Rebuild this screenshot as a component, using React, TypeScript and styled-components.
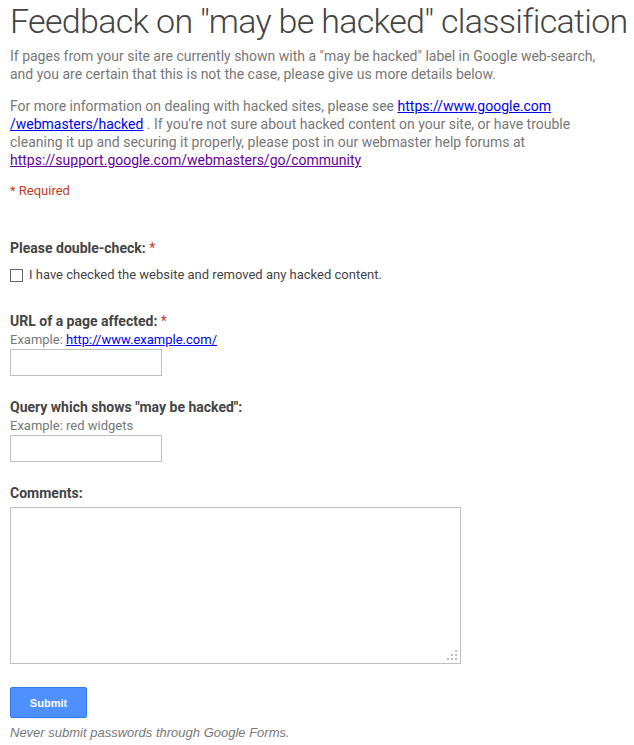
import React from "react";
import styled, { createGlobalStyle } from "styled-components";

const Global = createGlobalStyle`
  html, body { margin: 0; padding: 0; background: #fff; }
  body { font-family: Roboto, Arial, sans-serif; }
`;

const Page = styled.div`
  padding: 0 10px;
`;

const Title = styled.h1`
  margin: 0;
  font-family: Roboto, Arial, sans-serif;
  font-weight: 300;
  font-size: 34px;
  letter-spacing: -0.7px;
  line-height: 42px;
  color: #444;
  white-space: nowrap;
`;

const Desc = styled.p`
  margin: 5px 0 0;
  max-width: 598px;
  font-size: 14px;
  line-height: 18px;
  color: #777;
  & + & { margin-top: 14px; }
`;

const Link = styled.a<{ $visited?: boolean }>`
  color: ${(p) => (p.$visited ? "#660099" : "#0000ee")};
  text-decoration: underline;
`;

const Required = styled.div`
  margin-top: 13px;
  font-size: 13px;
  line-height: 18px;
  color: #c43b1d;
`;

const Question = styled.div<{ $gap: number }>`
  margin-top: ${(p) => p.$gap}px;
  display: flex;
  flex-direction: column;
  align-items: flex-start;
`;

const Label = styled.div`
  font-size: 14px;
  line-height: 18px;
  font-weight: 700;
  color: #444;
`;

const Star = styled.span`
  color: #c43b1d;
  font-weight: 400;
`;

const Help = styled.div`
  font-size: 13px;
  line-height: 18px;
  margin-top: 1px;
  color: #777;
`;

const CheckRow = styled.label`
  display: flex;
  align-items: center;
  gap: 6px;
  margin-top: 9px;
  font-size: 13px;
  line-height: 18px;
  color: #444;
`;

const Box = styled.span`
  width: 11px;
  height: 11px;
  border: 1px solid #666;
  background: #fff;
  display: inline-block;
`;

const TextInput = styled.div`
  width: 152px;
  height: 27px;
  border: 1px solid #c0c0c0;
  box-sizing: border-box;
`;

const TextArea = styled.div`
  position: relative;
  width: 451px;
  height: 157px;
  box-sizing: border-box;
  border: 1px solid #c0c0c0;
  margin-top: 5px;
`;

const Grip = styled.svg`
  position: absolute;
  right: 2px;
  bottom: 2px;
`;

const Submit = styled.button`
  margin-top: 23px;
  width: 77px;
  height: 31px;
  border: 1px solid #3079ed;
  border-radius: 2px;
  background: #4d90fe;
  color: #fff;
  font-family: Arial, "Liberation Sans", sans-serif;
  font-weight: 700;
  font-size: 11px;
  padding: 0;
`;

const Note = styled.div`
  margin-top: 7px;
  font-family: Arial, "Liberation Sans", sans-serif;
  font-style: italic;
  font-size: 13px;
  line-height: 16px;
  color: #777;
`;

export default function App() {
  return (
    <Page>
      <Global />
      <Title>Feedback on "may be hacked" classification</Title>
      <Desc>
        If pages from your site are currently shown with a "may be hacked" label in Google web-search,
        and you are certain that this is not the case, please give us more details below.
      </Desc>
      <Desc>
        For more information on dealing with hacked sites, please see{" "}
        <Link href="#">https://www.google.com</Link>
        <br />
        <Link href="#">/webmasters/hacked</Link> . If you're not sure about hacked content on your site, or have trouble
        cleaning it up and securing it properly, please post in our webmaster help forums at{" "}
        <Link href="#" $visited>https://support.google.com/webmasters/go/community</Link>
      </Desc>
      <Required>* Required</Required>
      <Question $gap={39}>
        <Label>
          Please double-check: <Star>*</Star>
        </Label>
        <CheckRow>
          <Box />
          I have checked the website and removed any hacked content.
        </CheckRow>
      </Question>
      <Question $gap={28}>
        <Label>
          URL of a page affected: <Star>*</Star>
        </Label>
        <Help>
          Example: <Link href="#">http://www.example.com/</Link>
        </Help>
        <TextInput />
      </Question>
      <Question $gap={22}>
        <Label>Query which shows "may be hacked":</Label>
        <Help>Example: red widgets</Help>
        <TextInput />
      </Question>
      <Question $gap={22}>
        <Label>Comments:</Label>
        <TextArea>
          <Grip width="11" height="11" viewBox="0 0 11 11">
            <rect x="8" y="0" width="2" height="2" fill="#bbb" />
            <rect x="4" y="4" width="2" height="2" fill="#bbb" />
            <rect x="8" y="4" width="2" height="2" fill="#bbb" />
            <rect x="0" y="8" width="2" height="2" fill="#bbb" />
            <rect x="4" y="8" width="2" height="2" fill="#bbb" />
            <rect x="8" y="8" width="2" height="2" fill="#bbb" />
          </Grip>
        </TextArea>
        <Submit>Submit</Submit>
        <Note>Never submit passwords through Google Forms.</Note>
      </Question>
    </Page>
  );
}
